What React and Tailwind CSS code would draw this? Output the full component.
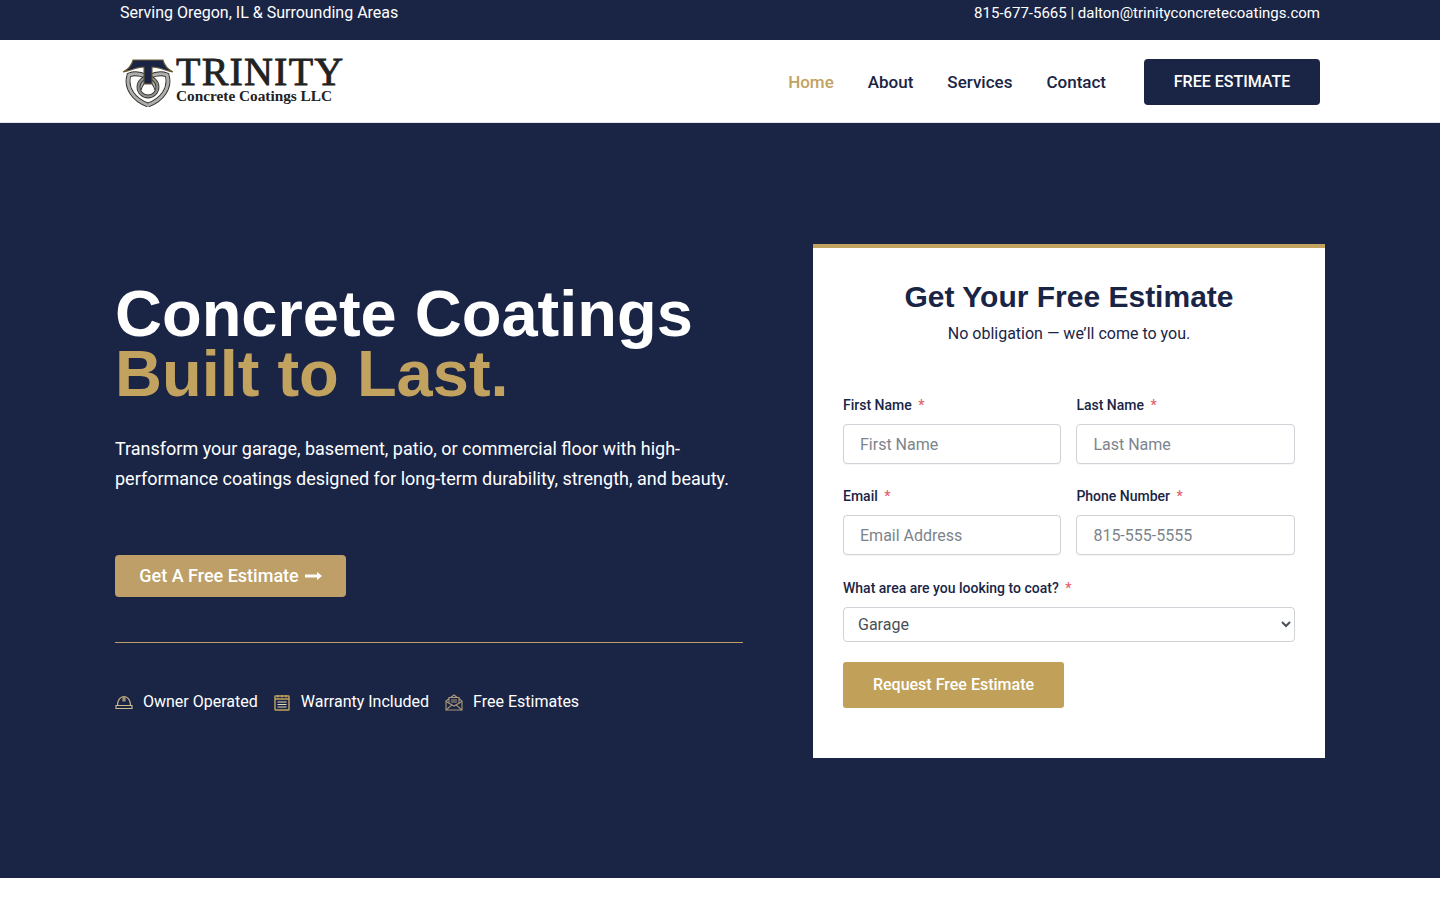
const navLinks = ['Home', 'About', 'Services', 'Contact'];

function KnotStrand({ d }) {
  return (
    <>
      <path d={d} stroke="#33302c" strokeWidth="4.8" />
      <path d={d} stroke="#aeafad" strokeWidth="3" />
    </>
  );
}

function Logo() {
  return (
    <div className="flex items-start">
      <svg width="56" height="50" viewBox="0 0 56 50" fill="none" className="mt-[2px]">
        <KnotStrand d="M28 48 C14 43 5 31 9 18 C20 14 34 21 37 33" />
        <KnotStrand d="M28 48 C42 43 51 31 47 18 C36 14 22 21 19 33" />
        <circle cx="28" cy="30" r="9.5" stroke="#33302c" strokeWidth="3.8" />
        <circle cx="28" cy="30" r="9.5" stroke="#8f908e" strokeWidth="2.2" />
        <path d="M3 15 C9 12 12 7 13 3 H43 C44 7 47 12 53 15 C46 14 40 10 32 10 V27 H24 V10 C16 10 10 14 3 15 Z" fill="#1a2546" stroke="#6b5a35" strokeWidth="1.1" />
      </svg>
      <div className="flex flex-col font-['Liberation_Serif',serif] text-[#222222]">
        <span className="text-[40px] leading-[33px] tracking-[1.2px] [-webkit-text-stroke:0.8px_#222222]">TRINITY</span>
        <span className="text-[15.3px] leading-[16px] font-bold">Concrete Coatings LLC</span>
      </div>
    </div>
  );
}

function Field({ label, placeholder }) {
  return (
    <div className="flex flex-col">
      <label className="mb-[10px] text-sm leading-[18px] font-medium text-[#1a2546]">
        {label} <span className="ml-[3px] text-[#e5616b]">*</span>
      </label>
      <input
        placeholder={placeholder}
        className="h-10 rounded-[4px] border border-[#cfd2d6] bg-white px-4 text-base text-[#495057] shadow-[0_1px_1px_rgba(0,0,0,0.04)] placeholder:text-[#7d848c]"
      />
    </div>
  );
}

function HardHat() {
  return (
    <svg width="18" height="16" viewBox="0 0 18 16" fill="none" stroke="#cdb98d" strokeWidth="1.1">
      <path d="M1 11.5 H17 V14.5 H1 Z" />
      <path d="M2.5 11.5 C2.5 6 5.5 2.5 9 2.5 C12.5 2.5 15.5 6 15.5 11.5" />
      <path d="M7.4 2 H10.6 V7.5 H7.4 Z" fill="#a3926f" stroke="none" />
    </svg>
  );
}

function Checklist() {
  return (
    <svg width="16" height="17" viewBox="0 0 16 17" fill="none" stroke="#c2a25f" strokeWidth="1.4">
      <rect x="1" y="2" width="14" height="14" rx="0.5" />
      <path d="M1 5 H15 M4 1 V3.5 M8 1 V3.5 M12 1 V3.5" />
      <path d="M3.5 8 H12.5 M3.5 10.5 H12.5 M3.5 13 H12.5" stroke="#e6dcc0" strokeWidth="1.1" />
    </svg>
  );
}

function MailOpen() {
  return (
    <svg width="18" height="17" viewBox="0 0 18 17" fill="none" stroke="#a99878" strokeWidth="1.1">
      <path d="M1 7 L9 1 L17 7 V16 H1 Z" />
      <path d="M1 7.5 L9 12 L17 7.5 M1 16 L7 10.8 M17 16 L11 10.8" />
      <path d="M4 9 V3.5 H14 V9" fill="#1a2546" />
      <path d="M6 6 H12 M6 8 H12" />
    </svg>
  );
}

export default function App() {
  return (
    <div className="min-h-[900px] bg-white font-['Roboto',sans-serif]">
      {/* top strip */}
      <div className="h-10 bg-[#1a2546] text-white">
        <div className="mx-auto flex w-[1200px] items-start justify-between pt-[3px] leading-[20px]">
          <span className="-mt-[2px] text-base">Serving Oregon, IL &amp; Surrounding Areas</span>
          <span className="text-[15px]">815-677-5665 | dalton@trinityconcretecoatings.com</span>
        </div>
      </div>

      {/* nav */}
      <header className="h-[83px] border-b border-[#e4e5e8] bg-white">
        <div className="mx-auto flex h-full w-[1200px] items-center justify-between">
          <Logo />
          <nav className="mt-[2px] flex items-center">
            <ul className="mt-[1px] mr-[38px] flex gap-[34px] text-[17px]">
              {navLinks.map((link, i) => (
                <li key={link} className={i === 0 ? 'font-medium text-[#c2a25f]' : 'font-medium text-[#1a2546]'}>
                  {link}
                </li>
              ))}
            </ul>
            <button className="h-[46px] w-[176px] rounded-[4px] bg-[#1a2546] font-medium text-white">FREE ESTIMATE</button>
          </nav>
        </div>
      </header>

      {/* hero */}
      <section className="h-[755px] bg-[#1a2546]">
        <div className="ml-[115px] flex w-[1210px] gap-[70px] pt-[121px]">
          <div className="w-[628px] pt-[40px]">
            <h1 className="font-['Liberation_Sans',sans-serif] text-[65px] leading-[60px] font-bold text-white">
              Concrete Coatings
              <span className="block text-[#c2a25f]">Built to Last.</span>
            </h1>
            <p className="mt-[30px] text-lg leading-[30px] text-white">
              Transform your garage, basement, patio, or commercial floor with high-performance coatings designed for long-term durability, strength, and beauty.
            </p>
            <button className="mt-[61px] flex h-[42px] w-[231px] items-center justify-center gap-[6px] rounded-[4px] bg-[#bd9f67] text-lg font-medium text-white">
              Get A Free Estimate
              <svg width="17" height="10" viewBox="0 0 17 10" fill="white"><path d="M0 3.5 H12 V1 L17 5 L12 9 V6.5 H0 Z" /></svg>
            </button>
            <div className="mt-[45px] border-t border-[#bd9f67]" />
            <ul className="mt-[47px] flex text-base text-white">
              <li className="mr-4 flex items-center gap-[10px]"><HardHat />Owner Operated</li>
              <li className="mr-4 flex items-center gap-[11px]"><Checklist />Warranty Included</li>
              <li className="flex items-center gap-[10px]"><MailOpen />Free Estimates</li>
            </ul>
          </div>

          <div className="h-[514px] w-[512px] border-t-4 border-[#c2a25f] bg-white px-[30px]">
            <h2 className="mt-[31px] text-center font-['Liberation_Sans',sans-serif] text-[30px] leading-[36px] font-bold text-[#1a2546]">
              Get Your Free Estimate
            </h2>
            <p className="mt-[9px] text-center text-base leading-[20px] text-[#1a2546]">No obligation — we’ll come to you.</p>
            <div className="mt-[52px] grid grid-cols-[218px_218.6px] gap-x-[15.4px] gap-y-[23px]">
              <Field label="First Name" placeholder="First Name" />
              <Field label="Last Name" placeholder="Last Name" />
              <Field label="Email" placeholder="Email Address" />
              <Field label="Phone Number" placeholder="815-555-5555" />
            </div>
            <label className="mt-[24px] mb-[10px] block text-sm leading-[18px] font-medium text-[#1a2546]">
              What area are you looking to coat? <span className="ml-[3px] text-[#e5616b]">*</span>
            </label>
            <select className="h-[35px] w-full rounded-[4px] border border-[#cfd2d6] bg-white px-2.5 text-base text-[#495057]">
              <option>Garage</option>
              <option>Basement</option>
              <option>Patio</option>
              <option>Commercial Floor</option>
            </select>
            <button className="mt-5 h-[46px] w-[221px] rounded-[3px] bg-[#c1a15a] font-medium text-white">Request Free Estimate</button>
          </div>
        </div>
      </section>
    </div>
  );
}
